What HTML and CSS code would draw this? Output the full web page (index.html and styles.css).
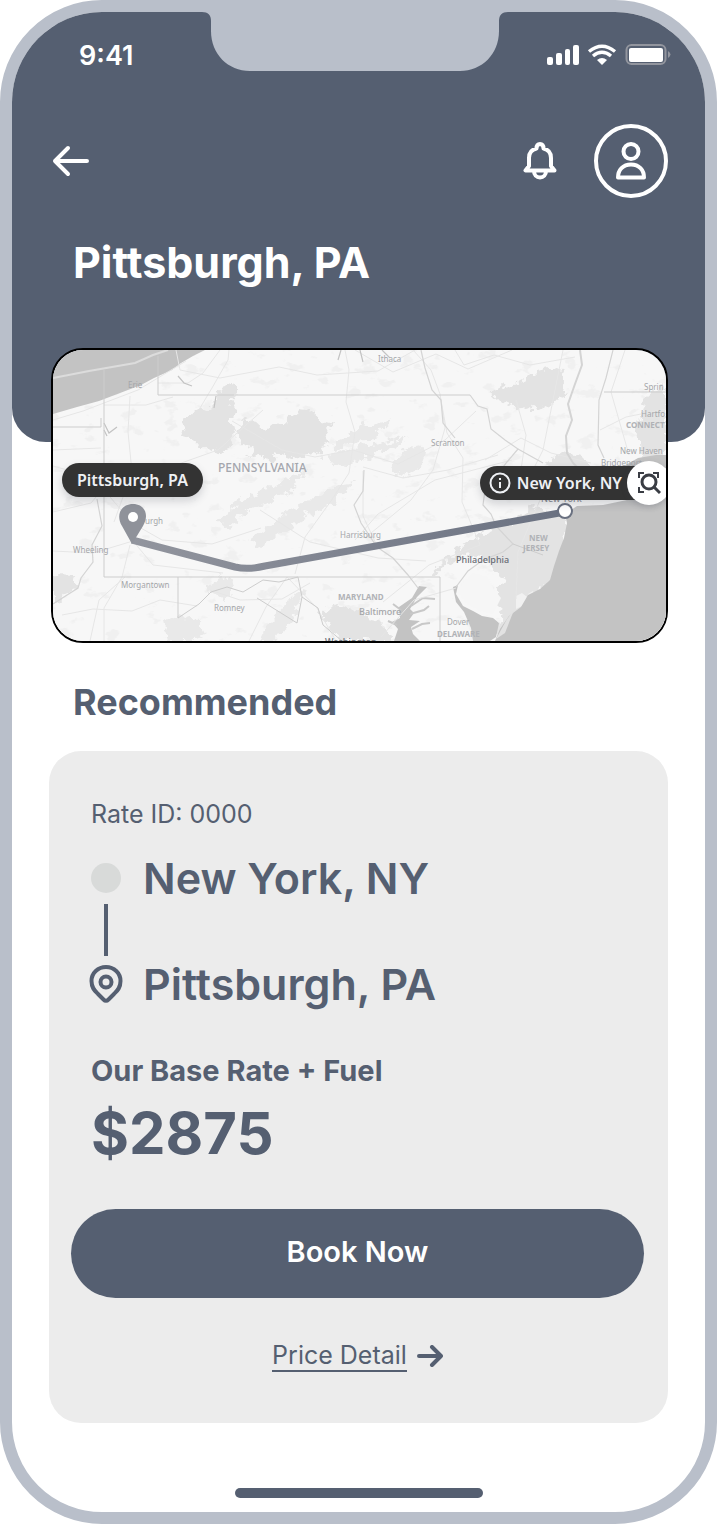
FILE: index.html
```html
<!DOCTYPE html>
<html lang="en">
<head>
    <meta charset="UTF-8">
    <meta name="viewport" content="width=device-width, initial-scale=1.0">
    <title>Pittsburgh, PA</title>
    <link rel="stylesheet" href="styles.css">
</head>

<body>
    <div class="phone">
        <header class="header">
            <div class="statusBar">
                <span class="time">9:41</span>
                <svg class="notch" width="306" height="59" viewBox="0 0 306 59" aria-hidden="true">
                    <path d="M0 0H306C300 0 297 3 297 9V19C297 42 280 59 258 59H48C26 59 9 42 9 19V9C9 3 6 0 0 0Z"/>
                </svg>
                <svg class="statusIcons" width="124" height="22" viewBox="0 0 124 22" aria-hidden="true">
                    <g fill="#fff">
                        <rect x="0" y="13" width="6" height="8" rx="2"/>
                        <rect x="9" y="9" width="6" height="12" rx="2"/>
                        <rect x="18" y="5" width="5" height="16" rx="2"/>
                        <rect x="26" y="1" width="6" height="20" rx="2"/>
                        <path d="M55 21l-5-5q5-4 10 0z"/>
                    </g>
                    <g fill="none" stroke="#fff" stroke-width="3.4">
                        <path d="M42 7.500q13-10.500 26 0M46 12q9-7.500 18 0"/>
                    </g>
                    <rect x="79.500" y="1" width="39" height="19" rx="5" fill="none" stroke="#92959e" stroke-width="2"/>
                    <rect x="82" y="4" width="34" height="14" rx="2" fill="#fff"/>
                    <path d="M121 7q5 3.500 0 7z" fill="#92959e"/>
                </svg>
            </div>
            <nav class="topNav">
                <button class="iconBtn" aria-label="Back">
                    <svg width="38" height="32" viewBox="0 0 38 32"><path d="M35 16H3M16 3L3 16l13 13"/></svg>
                </button>
                <button class="iconBtn bell" aria-label="Notifications">
                    <svg width="34" height="38" viewBox="0 0 34 38"><path d="M2.500 28.500H31.500L28 24V16C28 11 25 7.500 20.500 6.500C20.500 3.500 19 2 17 2S13.500 3.500 13.500 6.500C9 7.500 6 11 6 16V24ZM11 29C11 33 13.500 35.500 17 35.500S23 33 23 29"/></svg>
                </button>
                <button class="iconBtn avatar" aria-label="Profile">
                    <svg width="30" height="38" viewBox="0 0 30 38"><circle cx="15" cy="9.500" r="7.500"/><path d="M2 35.500C2 28 7 22.500 15 22.500S28 28 28 35.500Z"/></svg>
                </button>
            </nav>
            <h1>Pittsburgh, PA</h1>
        </header>

        <main class="content">
            <div class="map">
                <svg class="mapImage" viewBox="53 350 613 291" role="img" aria-label="Route map">
                    <defs>
                        <filter id="terrain" x="0" y="0" width="100%" height="100%">
                            <feTurbulence type="fractalNoise" baseFrequency="0.05 0.08" numOctaves="4" seed="8"/>
                            <feColorMatrix values="0 0 0 0 0.87  0 0 0 0 0.87  0 0 0 0 0.87  10 0 0 0 -6.300"/>
                        </filter>
                        <filter id="rough" x="-5%" y="-5%" width="110%" height="110%">
                            <feTurbulence type="fractalNoise" baseFrequency="0.12" numOctaves="3" seed="3"/>
                            <feDisplacementMap in="SourceGraphic" scale="14" xChannelSelector="R" yChannelSelector="G"/>
                        </filter>
                        <linearGradient id="route" x1="132" y1="0" x2="565" y2="0" gradientUnits="userSpaceOnUse">
                            <stop offset="0" stop-color="#92959e"/>
                            <stop offset="1" stop-color="#6a7181"/>
                        </linearGradient>
                    </defs>
                    <rect x="53" y="350" width="613" height="291" fill="#f7f7f7"/>
                    <rect x="53" y="350" width="613" height="291" filter="url(#terrain)"/>

                    <!-- forests and built-up areas -->
                    <g fill="#e3e3e3" filter="url(#rough)">
                        <path d="M181 434L184 422L192 411L199 408L210 410L218 399L215 391L225 388L229 384L237 385V395L231 400L236 411L231 422L234 432L230 448L221 453L211 447L201 449L195 438Z"/>
                        <path d="M235 432L244 424L243 419L256 421L266 430L274 423L286 425L288 413L298 416L299 409L310 410L321 420L334 423L328 434L332 443L318 448L320 458L305 453L295 461L283 453L271 461L260 455L249 457L253 446L240 441Z"/>
                        <path d="M490 393L502 386L518 383L527 381L537 371L551 369L561 371L564 380L561 389L568 396L554 401L548 406L540 411L531 406L518 409L506 402L498 400Z"/>
                        <path d="M548 462l14-11l18 4l14 14l-12 18h-20zM638 422l8-22l20-18v80l-26-6z"/>
                        <path d="M53 575L75 576L73 591L53 605Z"/>
                        <path d="M320 612l18-8l26 10l20 12l6 15h-48l-12-14z"/>
                        <path d="M430 577l24-26l30-18l28-12l22-14l26 8l6 10l-2 22l-10 30l-30 30l-14 28h-14l8-26l-12-10l12-16l-14-24l-20-4l-20 6l-14 16z"/>
                    </g>
                    <g fill="#e9e9e9" filter="url(#rough)">
                        <path d="M218 520l30-24l42-17l17-9l-18 22l-40 17l-22 19zM250 540l35-26l36-19l-14 20l-46 32zM300 505l34-18l22-4l-19 16l-31 17zM335 440l27-13l30-6l-16 15l-41 15zM330 455l32-9l44-7l-32 17l-40 11zM262 632l32-38l12-4l-18 35l-14 16h-14z"/>
                        <path d="M163 623l18-8l17 6l7 13l-13 7h-24zM205 590l17-13l12 6l-10 19zM390 468l17-20l18-2l-4 22l-19 9z"/>
                    </g>
                    <path d="M462 583L474 573L488 577L493 588L501 598L493 614L480 611L467 604L458 592Z" fill="#f6f6f6"/>
                    <path d="M516 596l6-3l5 4l-3 8l-8 4zM528 594l5-3l2 6l-6 2z" fill="#f1f1f1"/>

                    <!-- lakes, bays and ocean -->
                    <g fill="#c3c3c3">
                        <path d="M53 350H205L193 356L181 363L172 370L154 378L141 385L120 393L99 401L77 407L53 414Z"/>
                        <path d="M577 506L603 505L627 500L648 497L666 495V641H495L500 629L509 616L521 607L528 595L540 589L550 580L554 566L559 551L564 538L567 523L565 514Z"/>
                        <path d="M624 466L638 458L656 455L666 455V468L636 473Z"/>
                        <path d="M453 587L458 585L456 594L463 606L473 611L482 616L493 618L499 623L496 637L490 641H473L471 628L464 612L456 602Z"/>
                        <path d="M419 586L427 587L417 597L410 609L414 613L409 620L420 621L411 627L413 634L420 641H394L398 629L392 622L400 618L399 607L412 598Z"/>
                    </g>
                    <path d="M411 606l12-8l12 1M410 614l14-4l5-4M412 629l10-5l8-1M401 610l-8-6M397 625l-9-4" fill="none" stroke="#c8c8c8" stroke-width="2"/>
                    <path d="M496 639L507 619L514 610L505 633Z" fill="#e2e2e2"/>
                    <g fill="#dedede">
                        <path d="M570 500L590 494L616 487L641 480L666 474V486L632 494L603 498Z"/>
                    </g>
                    <path d="M53 378L89 371L135 363L153 355L168 350" fill="none" stroke="#dcdcdc" stroke-width="2"/>

                    <!-- highways -->
                    <g fill="none" stroke="#e6e6e6" stroke-width="1">
                        <path d="M53 420l30-9l55-21l48-29M130 396l-2 36l4 40l-18 50M104 405h42l27-8M158 383h30l15-10l17-23M53 450l48-2M53 466l25 7l27 18l27 32l30 17l50 4l49-16M104 473l66-6l48-17l45-40M53 551l40 2l40-12l20 24l70 8M130 545l-8 32l-18 31v33"/>
                        <path d="M200 408l12-20l16-28l1-10M232 421l50 29l33 7l38-7l45 14l47-24l31-29M345 350l4 20l-3 32l9 30l-6 41l-18 28l-26 36l-10 37M413 350l18 20l9 24l5 34l-12 42l-22 30l-46 38M440 395l7 38l16 25l-1 44l18 43M363 467l40 11l45-8l50-15M355 540l23-26l57-34l77-20M363 471v45l14 30M260 510l50 32l68 16l48 3M287 577l-21 30l-17 34M287 577l30 31l19 33M210 590l30 10l42-1l28-16"/>
                        <path d="M485 460l36-22l30 15l40 10M500 500l21-30l5-35l-10-35M518 500l25-50l20-100M456 588l-42 12l-33 37M480 545l-51 20l-46 37M540 500l-22 52l-2 47M625 350l-14 42l18 63M600 430l26-13l40-8"/>
                        <path d="M62 615l31-6l39 2l28-11l37 6M90 641l9-41l26-23M53 512l38-9l26-31M355 350l38 22l43-18l32 15l44-19M455 350l9 15l30-10l36 10l45-8M176 350l4 20l40 8l59-11l38 8l61-4l37-21"/>
                    </g>

                    <!-- rivers -->
                    <g fill="none" stroke="#d4d4d4" stroke-width="1.200">
                        <path d="M580 350L582 365L575 384L568 404L572 420L566 436L567 453L573 463L580 470" stroke-width="2"/>
                        <path d="M613 350L606 378L599 400L598 445L604 458"/>
                        <path d="M470 395L478 406L487 409L491 429L505 440L518 449L507 462L497 475L485 490L483 505L491 514L496 526L513 544L503 552L483 560L468 571L456 587"/>
                        <path d="M364 470L363 491L354 505L361 523L377 547L393 558L408 575L418 588"/>
                        <path d="M97 499L102 526L92 545L93 562L81 578L78 588L53 604"/>
                        <path d="M421 350L425 368L432 390L441 400L443 423L455 438M518 449L543 463"/>
                        <path d="M178 376L184 383L192 386M104 423l5 10l8-6M104 430l3 6M216 396l-2 12M360 350l3 12M382 350l8 8M341 350l-3 10" stroke="#c3c3c3"/>
                    </g>

                    <!-- state borders -->
                    <g fill="none" stroke="#cdcdcd" stroke-width="1">
                        <path d="M104 370V577H440V641M158 356V395H470M178 577V618L199 604L211 592L227 587L243 592L263 580L279 582L298 577L302 597L297 623L257 598M302 597L318 608L323 625L342 641M604 392H666M513 544L543 555M53 427H101V418"/>
                    </g>

                    <!-- place names -->
                    <g class="places">
                        <text x="128" y="388">Erie</text>
                        <text x="378" y="362">Ithaca</text>
                        <text x="431" y="446">Scranton</text>
                        <text x="644" y="390">Sprin</text>
                        <text x="641" y="417">Hartfo</text>
                        <text x="620" y="454">New Haven</text>
                        <text x="601" y="466">Bridgeport</text>
                        <text x="145" y="524">urgh</text>
                        <text x="73" y="553">Wheeling</text>
                        <text x="121" y="588">Morgantown</text>
                        <text x="214" y="611">Romney</text>
                        <text x="340" y="538">Harrisburg</text>
                        <text x="447" y="625">Dover</text>
                    </g>
                    <g class="states">
                        <text class="wide" x="218" y="472">PENNSYLVANIA</text>
                        <text x="338" y="600">MARYLAND</text>
                        <text x="626" y="428">CONNECT</text>
                        <text x="529" y="541">NEW</text>
                        <text x="523" y="551">JERSEY</text>
                        <text x="437" y="637">DELAWARE</text>
                    </g>
                    <g class="cities">
                        <text x="359" y="615" fill="#a4a6a9">Baltimore</text>
                        <text x="456" y="563" fill="#696d75">Philadelphia</text>
                        <text x="541" y="502" fill="#8b8e95">New York</text>
                        <text x="325" y="645" fill="#696d75">Washington</text>
                    </g>

                    <!-- route -->
                    <path d="M132 540L235 567Q248 570 265 566L565 512" fill="none" stroke="url(#route)" stroke-width="7"/>
                    <path d="M132 544L122 526C115 514 122 504 133 504S150 514 143 526Z" fill="#8f929a"/>
                    <circle cx="133" cy="517" r="5" fill="#fff"/>
                    <circle cx="565" cy="511" r="7" fill="#fff" stroke="#6a7181" stroke-width="2"/>
                </svg>
                <span class="tag tagFrom">Pittsburgh, PA</span>
                <span class="tag tagTo">
                    <svg width="22" height="22" viewBox="0 0 22 22" aria-hidden="true"><circle cx="11" cy="11" r="9.500"/><path d="M11 10v6M11 6v2"/></svg>
                    New York, NY
                </span>
                <button class="scanBtn" aria-label="Search this area">
                    <svg width="24" height="24" viewBox="0 0 24 24"><path d="M2 7V2h5M16 2h5v5M2 16v5h5"/><circle class="lens" cx="12" cy="11" r="7"/><path class="lens" d="M17 16l6 6"/></svg>
                </button>
            </div>

            <h2>Recommended</h2>

            <section class="card">
                <p class="rateId">Rate ID: 0000</p>
                <div class="stops">
                    <span class="dot"></span>
                    <span class="stop">New York, NY</span>
                    <span class="line"></span>
                    <svg class="pin" width="34" height="40" viewBox="0 0 34 40" aria-hidden="true"><path d="M17 3C9 3 2.500 9 2.500 17C2.500 24 6 27 9 30L14.500 35.500Q17 38 19.500 35.500L25 30C28 27 31.500 24 31.500 17C31.500 9 25 3 17 3Z"/><circle cx="17" cy="18" r="5.500"/></svg>
                    <span class="stop">Pittsburgh, PA</span>
                </div>
                <p class="rateLabel">Our Base Rate + Fuel</p>
                <p class="price">$2875</p>
                <button class="bookBtn">Book Now</button>
                <a class="detail" href="#">
                    <span>Price Detail</span>
                    <svg width="26" height="22" viewBox="0 0 26 22" aria-hidden="true"><path d="M2 11H24M15 2l9 9l-9 9"/></svg>
                </a>
            </section>
        </main>
        <div class="homeBar"></div>
    </div>
</body>
</html>
```

FILE: styles.css
```css
* {
    box-sizing: border-box;
}
body {
    margin: 0;
    background: #fff;
    color: #555f71;
    font-family: Inter, "Liberation Sans", sans-serif;
}
h1, h2, p {
    margin: 0;
}
button {
    font-family: inherit;
    cursor: pointer;
}
.phone {
    min-height: 100vh;
    border: 12px solid #b9bfca;
    border-radius: 102px;
    background: #fff;
    overflow: hidden;
}

/* header */
.header {
    background: #555f71;
    color: #fff;
    border-radius: 0 0 34px 34px;
    padding-bottom: 152px;
}
.statusBar {
    display: grid;
    grid-template-columns: 1fr auto 1fr;
    height: 62px;
    padding-right: 7px;
}
.time {
    font-size: 27px;
    font-weight: 600;
    line-height: 32px;
    padding: 28px 0 0 67px;
}
.notch {
    fill: #b9bfca;
}
.statusIcons {
    margin: 32px 27px 0 0;
    justify-self: end;
}
.topNav {
    display: flex;
    align-items: center;
    padding: 50px 37px 0 40px;
}
.iconBtn {
    display: flex;
    align-items: center;
    justify-content: center;
    padding: 0;
    border: none;
    background: none;
}
.iconBtn svg {
    fill: none;
    stroke: #fff;
    stroke-width: 4;
    stroke-linecap: round;
    stroke-linejoin: round;
}
.bell {
    margin: 0 37px 0 auto;
}
.avatar {
    width: 74px;
    height: 74px;
    border: 4px solid #fff;
    border-radius: 50%;
}
.header h1 {
    font-size: 43px;
    font-weight: 700;
    line-height: 56px;
    padding: 36px 0 0 61px;
}

/* map */
.content {
    padding: 0 37px;
}
.map {
    position: relative;
    margin: -94px 0 35px 2px;
    border: 2px solid #000;
    border-radius: 32px;
    overflow: hidden;
}
.mapImage {
    display: block;
    width: 100%;
}
.places {
    font-family: "Noto Sans", sans-serif;
    font-size: 8px;
    fill: #a4a6a9;
}
.states {
    font-family: "Noto Sans", sans-serif;
    font-size: 8px;
    font-weight: 700;
    fill: #b0b2b6;
}
.states .wide {
    font-size: 12px;
    font-weight: 500;
    fill: #a4a6ad;
}
.cities {
    font-family: "Noto Sans", sans-serif;
    font-size: 9px;
    font-weight: 500;
}
.tag {
    position: absolute;
    display: flex;
    align-items: center;
    gap: 6px;
    height: 34px;
    padding: 0 15px;
    border-radius: 17px;
    background: #333;
    color: #eef0f4;
    font-family: "Noto Sans", sans-serif;
    font-size: 16px;
    font-weight: 600;
    white-space: nowrap;
    box-shadow: 0 4px 8px rgba(60, 65, 80, 0.2);
}
.tagFrom {
    left: 9px;
    top: 39%;
}
.tagTo {
    right: 0;
    top: 40%;
    padding: 0 44px 0 9px;
}
.tagTo svg {
    fill: none;
    stroke: #eef0f4;
    stroke-width: 2;
}
.scanBtn {
    position: absolute;
    right: -5px;
    top: 38%;
    width: 44px;
    height: 44px;
    padding: 0;
    border: none;
    border-radius: 50%;
    background: #fff;
    display: flex;
    align-items: center;
    justify-content: center;
    box-shadow: 0 2px 6px rgba(60, 65, 80, 0.2);
}
.scanBtn svg {
    fill: none;
    stroke: #3a3d44;
    stroke-width: 2;
}
.scanBtn .lens {
    stroke-width: 3;
}

/* recommended rate */
.content h2 {
    font-size: 36px;
    font-weight: 700;
    line-height: 48px;
    padding-left: 24px;
    margin-bottom: 25px;
}
.card {
    background: #ececec;
    border-radius: 32px;
    padding: 47px 24px 51px 22px;
}
.rateId, .stops, .rateLabel, .price {
    padding-left: 20px;
}
.rateId {
    font-size: 25px;
    line-height: 32px;
    margin-bottom: 24px;
}
.stops {
    display: grid;
    grid-template-columns: 30px 1fr;
    column-gap: 22px;
    align-items: center;
    justify-items: center;
    margin-bottom: 45px;
}
.stop {
    font-size: 43px;
    font-weight: 600;
    line-height: 48px;
    justify-self: start;
}
.dot {
    width: 30px;
    height: 30px;
    border-radius: 50%;
    background: #d8dad9;
}
.line {
    grid-column: 1;
    width: 4px;
    height: 52px;
    margin: 2px 0 4px;
    background: #555f71;
}
.pin {
    grid-column: 1;
    fill: none;
    stroke: #555f71;
    stroke-width: 4;
}
.rateLabel {
    font-size: 29px;
    font-weight: 700;
    line-height: 36px;
    margin-bottom: 8px;
}
.price {
    font-size: 58px;
    font-weight: 700;
    line-height: 72px;
    margin-bottom: 40px;
}
.bookBtn {
    display: block;
    width: 100%;
    height: 89px;
    padding: 0 0 4px;
    border: none;
    border-radius: 45px;
    background: #555f71;
    color: #fff;
    font-size: 29px;
    font-weight: 600;
    margin-bottom: 42px;
}
.detail {
    display: flex;
    align-items: center;
    justify-content: center;
    gap: 10px;
    color: #555f71;
    font-size: 25px;
    line-height: 30px;
    text-decoration: none;
}
.detail span {
    border-bottom: 2px solid #555f71;
}
.detail svg {
    fill: none;
    stroke: #555f71;
    stroke-width: 4;
    stroke-linecap: round;
    stroke-linejoin: round;
}
.homeBar {
    width: 248px;
    height: 10px;
    margin: 65px auto 14px;
    border-radius: 5px;
    background: #555f71;
}
```
